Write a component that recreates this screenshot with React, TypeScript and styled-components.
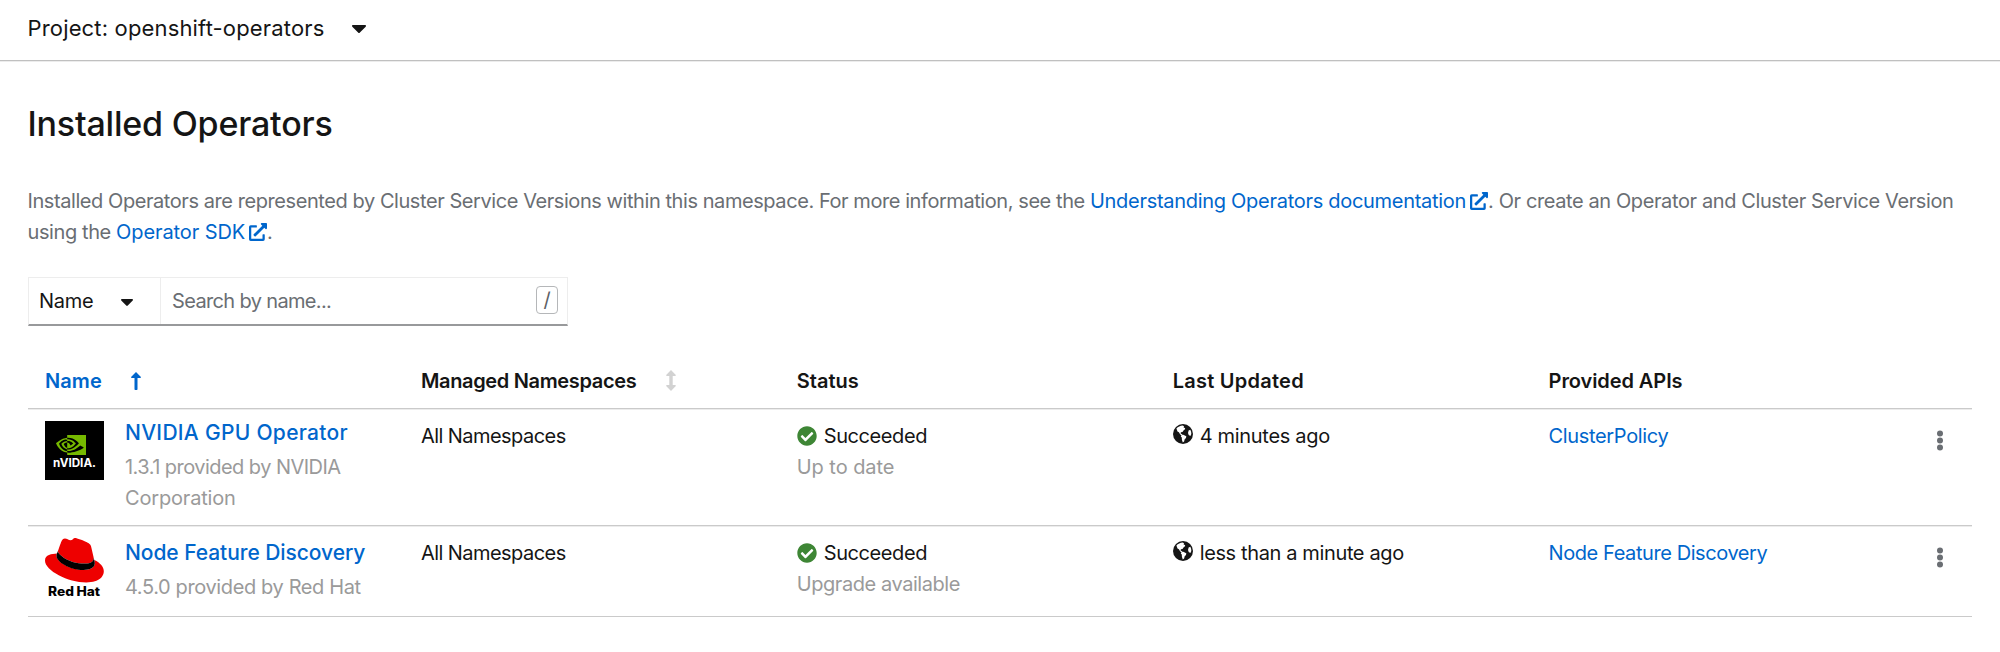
import React from 'react';
import styled, { createGlobalStyle } from 'styled-components';
import { FaCheckCircle, FaExternalLinkAlt } from 'react-icons/fa';
import { SiNvidia } from 'react-icons/si';

const colors = {
  text: '#151515',
  muted: '#6a6e73',
  faint: '#9a9a9a',
  link: '#0066cc',
  line: '#cacaca',
  lineSoft: '#ececec',
  success: '#3e8635',
};

const GlobalStyle = createGlobalStyle`
  * { box-sizing: border-box; }
  body {
    margin: 0;
    background: #fff;
    color: ${colors.text};
    font-family: Inter, "Liberation Sans", sans-serif;
    font-size: 20px;
    line-height: 31px;
  }
  a { color: ${colors.link}; text-decoration: none; }
`;

const Txt = styled.span<{ $ls?: number }>`
  letter-spacing: ${(p) => p.$ls ?? 0}px;
  white-space: nowrap;
`;

const ProjectBar = styled.header`
  display: flex;
  align-items: center;
  gap: 27px;
  height: 61px;
  padding: 0 28px 4px 27.5px;
  border-bottom: 1px solid #c0c0c0;
  box-shadow: 0 1px 0 ${colors.lineSoft};
  font-size: 22px;
`;

const Page = styled.main`
  padding: 41px 28px 0;
`;

const Title = styled.h1`
  margin: 0 0 40px -0.5px;
  font-size: 34px;
  font-weight: 500;
  line-height: 44px;
  letter-spacing: -0.2px;
`;

const Intro = styled.p`
  margin: 0 0 29px -0.5px;
  color: ${colors.muted};
  white-space: nowrap;
`;

const ExternalIcon = styled(FaExternalLinkAlt)`
  width: 18px;
  height: 18px;
  margin-left: 4px;
  vertical-align: -2px;
`;

const FilterBar = styled.div`
  display: flex;
  width: 540px;
  height: 49px;
  border: 1px solid #ededed;
  border-bottom: 2px solid #98999b;
`;

const FilterSelect = styled.button`
  display: flex;
  align-items: center;
  justify-content: space-between;
  width: 132px;
  padding: 0 27px 0 10px;
  border: 0;
  border-right: 1px solid #ededed;
  background: #fff;
  color: ${colors.text};
  font: inherit;
`;

const SearchField = styled.div`
  display: flex;
  flex: 1;
  align-items: center;
  justify-content: space-between;
  padding: 0 9px 0 11px;
  color: ${colors.muted};
`;

const KeyHint = styled.kbd`
  display: flex;
  align-items: center;
  justify-content: center;
  width: 22px;
  height: 28px;
  margin-bottom: 2px;
  border: 1px solid #b5b7b9;
  border-radius: 4px;
  color: #5d6166;
  font: 20px Inter, sans-serif;
`;

const Table = styled.section`
  margin-top: 23px;
`;

const Row = styled.div<{ $height: number }>`
  display: grid;
  grid-template-columns: repeat(5, 375.9px) 1fr;
  height: ${(p) => p.$height}px;
  padding-left: 17px;
  border-bottom: 1px solid ${colors.line};
  box-shadow: 0 1px 0 ${colors.lineSoft};
`;

const HeadRow = styled(Row)`
  align-items: center;
  padding-top: 5px;
  font-weight: 600;
`;

const HeadCell = styled.div<{ $active?: boolean; $gap?: number }>`
  display: flex;
  align-items: center;
  gap: ${(p) => p.$gap ?? 0}px;
  color: ${(p) => (p.$active ? colors.link : colors.text)};

  svg {
    margin-bottom: 1px;
  }
`;

const Cell = styled.div`
  padding-top: 12px;
`;

const NameCell = styled.div`
  display: flex;
  gap: 21px;
  padding-top: 12px;
`;

const NameBlock = styled.div<{ $offset: number }>`
  margin-top: ${(p) => p.$offset}px;
`;

const OperatorLink = styled.a`
  display: block;
  margin-bottom: 4px;
  font-size: 21px;
  font-weight: 500;
`;

const Sub = styled.div`
  color: ${colors.faint};
`;

const IconLine = styled.div<{ $gap: number }>`
  display: flex;
  align-items: center;
  gap: ${(p) => p.$gap}px;
`;

const SuccessIcon = styled(FaCheckCircle)`
  width: 20px;
  height: 20px;
  margin-bottom: 1px;
  color: ${colors.success};
`;

const GlobeSvg = styled.svg`
  margin-bottom: 6px;
`;

const ActionCell = styled.div`
  display: flex;
  padding: 21px 0 0 13px;
`;

const NvidiaTile = styled.div`
  display: flex;
  flex: none;
  flex-direction: column;
  width: 59px;
  height: 59px;
  padding: 9px 0 0 7px;
  background: #000;
  color: #76b900;
`;

const NvidiaEye = styled(SiNvidia)`
  width: 30px;
  height: 30px;
  margin-left: 4px;
`;

const Wordmark = styled.svg`
  margin-top: -7px;
  overflow: visible;
`;

const RedHatSvg = styled.svg`
  flex: none;
  overflow: visible;
`;

const CaretSvg = styled.svg`
  position: relative;
  top: 1.5px;
`;

const Caret = ({ width }: { width: number }) => (
  <CaretSvg width={width} height={width * 0.58} viewBox="0 0 14 8" fill={colors.text}>
    <path d="M1 0h12c.9 0 1.3 1 .7 1.6L7.9 7.5a1.2 1.2 0 0 1-1.8 0L.3 1.6C-.3 1 .1 0 1 0z" />
  </CaretSvg>
);

const SortUp = () => (
  <svg width="10" height="18" viewBox="0 0 10 18" fill={colors.link}>
    <path d="M5 0l4.700 4.700c.5.5.2 1.300-.5 1.300H6.500v11.200c0 .4-.3.7-.7.7H4.200a.7.7 0 0 1-.7-.7V6H.8C.1 6-.2 5.200.3 4.700z" />
  </svg>
);

const SortBoth = () => (
  <svg width="10" height="21" viewBox="0 0 10 21" fill="#d2d2d2">
    <path d="M5 0l4.600 4.700c.5.5.2 1.300-.5 1.300H6.700v9h2.400c.7 0 1 .8.5 1.300L5 21 .4 16.300C-.1 15.800.2 15 .9 15h2.400V6H.9C.2 6-.1 5.200.4 4.700z" />
  </svg>
);

const Globe = () => (
  <GlobeSvg width="20" height="20" viewBox="0 0 20 20">
    <circle cx="10" cy="10" r="10" fill={colors.text} />
    <path
      fill="#fff"
      d="M3.400 4.600C5 2.700 7.200 1.700 9.800 1.500l1.200.8-.4 1.300 1.300.3.300 1.200-1.700 1.300-1 1.500-1.600.4-.3 1.300 1.900.8-.3 1.200-2-1.200-1.300-2.100-1.400-.9z"
    />
    <path fill="#fff" d="M8.300 11.300l2-.5 3 1.500-.3 1.700-1.300 1.300-.6 2.100-1.300 1-.9-2.600-.1-2.200-1-1.100z" />
    <path fill="#fff" d="M15.600 6.400l1.700-.6c.8 1.300 1.100 2.700 1 4.200l-.9 1.900-1.700-1-.7-1.800z" />
  </GlobeSvg>
);

const Kebab = () => (
  <svg width="6" height="22" viewBox="0 0 6 22" fill="#6a6e73">
    <circle cx="3" cy="3.500" r="3" />
    <circle cx="3" cy="10.500" r="3" />
    <circle cx="3" cy="17.500" r="3" />
  </svg>
);

const NvidiaLogo = () => (
  <NvidiaTile>
    <NvidiaEye />
    <Wordmark width="46" height="20" viewBox="0 0 46 20">
      <text x="1" y="13.500" fill="#fff" fontFamily="Inter, sans-serif" fontSize="11.500" fontWeight="700" textLength="43" lengthAdjust="spacingAndGlyphs">
        nVIDIA.
      </text>
    </Wordmark>
  </NvidiaTile>
);

const RedHatLogo = () => (
  <RedHatSvg width="59" height="59" viewBox="0 0 59 59">
    <g transform="translate(0 -7.200) scale(2.450)">
      <path
        fill="#e00"
        d="M16.009 13.386c1.577 0 3.860-.326 3.860-2.202a1.765 1.765 0 0 0-.04-.431l-.94-4.080c-.216-.898-.406-1.305-1.982-2.093-1.223-.625-3.888-1.658-4.676-1.658-.733 0-.947.946-1.822.946-.842 0-1.467-.706-2.255-.706-.757 0-1.250.515-1.630 1.576 0 0-1.060 2.990-1.197 3.424a.81.81 0 0 0-.028.245c0 1.162 4.577 4.974 10.710 4.974m4.101-1.435c.218 1.032.218 1.140.218 1.277 0 1.765-1.984 2.745-4.593 2.745-5.895.004-11.060-3.451-11.060-5.734a2.326 2.326 0 0 1 .190-.925C2.746 9.415 0 9.794 0 12.217c0 3.969 9.405 8.861 16.851 8.861 5.710 0 7.149-2.582 7.149-4.620 0-1.605-1.387-3.425-3.887-4.512"
      />
      <path
        fill="#000"
        d="M20.110 11.950c.218 1.030.218 1.140.218 1.277 0 1.765-1.984 2.745-4.593 2.745-5.895 0-11.060-3.450-11.060-5.734 0-.320.065-.630.190-.925l.46-1.140a.82.82 0 0 0-.03.25c0 1.160 4.577 4.970 10.710 4.970 1.577 0 3.860-.326 3.860-2.200a1.770 1.770 0 0 0-.04-.43z"
      />
    </g>
    <text x="3" y="57.500" fill="#000" fontFamily="Inter, sans-serif" fontSize="12.500" fontWeight="800" wordSpacing="-0.500" textLength="52" lengthAdjust="spacingAndGlyphs">
      Red Hat
    </text>
  </RedHatSvg>
);

interface Label {
  text: string;
  ls: number;
}

interface Operator {
  logo: React.ReactNode;
  name: Label;
  provider: Label[];
  update: Label;
  updated: Label;
  api: Label;
  height: number;
  nameOffset: number;
}

const operators: Operator[] = [
  {
    logo: <NvidiaLogo />,
    name: { text: 'NVIDIA GPU Operator', ls: 0.3 },
    provider: [
      { text: '1.3.1 provided by NVIDIA', ls: -0.54 },
      { text: 'Corporation', ls: -0.18 },
    ],
    update: { text: 'Up to date', ls: -0.06 },
    updated: { text: '4 minutes ago', ls: -0.31 },
    api: { text: 'ClusterPolicy', ls: -0.34 },
    height: 117,
    nameOffset: -4,
  },
  {
    logo: <RedHatLogo />,
    name: { text: 'Node Feature Discovery', ls: -0.06 },
    provider: [{ text: '4.5.0 provided by Red Hat', ls: -0.38 }],
    update: { text: 'Upgrade available', ls: -0.44 },
    updated: { text: 'less than a minute ago', ls: -0.37 },
    api: { text: 'Node Feature Discovery', ls: -0.42 },
    height: 91,
    nameOffset: -1,
  },
];

const OperatorRow = ({ op }: { op: Operator }) => (
  <Row $height={op.height}>
    <NameCell>
      {op.logo}
      <NameBlock $offset={op.nameOffset}>
        <OperatorLink href="#">
          <Txt $ls={op.name.ls}>{op.name.text}</Txt>
        </OperatorLink>
        {op.provider.map((line) => (
          <Sub key={line.text}>
            <Txt $ls={line.ls}>{line.text}</Txt>
          </Sub>
        ))}
      </NameBlock>
    </NameCell>
    <Cell>
      <Txt $ls={-0.55}>All Namespaces</Txt>
    </Cell>
    <Cell>
      <IconLine $gap={7}>
        <SuccessIcon />
        <Txt $ls={-0.42}>Succeeded</Txt>
      </IconLine>
      <Sub>
        <Txt $ls={op.update.ls}>{op.update.text}</Txt>
      </Sub>
    </Cell>
    <Cell>
      <IconLine $gap={7}>
        <Globe />
        <Txt $ls={op.updated.ls}>{op.updated.text}</Txt>
      </IconLine>
    </Cell>
    <Cell>
      <a href="#">
        <Txt $ls={op.api.ls}>{op.api.text}</Txt>
      </a>
    </Cell>
    <ActionCell>
      <Kebab />
    </ActionCell>
  </Row>
);

export default function App() {
  return (
    <>
      <GlobalStyle />
      <ProjectBar>
        <Txt $ls={0.16}>Project: openshift-operators</Txt>
        <Caret width={14} />
      </ProjectBar>
      <Page>
        <Title>Installed Operators</Title>
        <Intro>
          <Txt $ls={-0.43}>
            Installed Operators are represented by Cluster Service Versions within this namespace. For more information, see the{' '}
          </Txt>
          <a href="#">
            <Txt $ls={-0.289}>Understanding Operators documentation</Txt>
            <ExternalIcon />
          </a>
          <Txt $ls={-0.394}>. Or create an Operator and Cluster Service Version</Txt>
          <br />
          <Txt $ls={-0.4}>using the </Txt>
          <a href="#">
            <Txt $ls={-0.1}>Operator SDK</Txt>
            <ExternalIcon />
          </a>
          .
        </Intro>
        <FilterBar>
          <FilterSelect>
            <Txt $ls={-0.27}>Name</Txt>
            <Caret width={12} />
          </FilterSelect>
          <SearchField>
            <Txt $ls={-0.65}>Search by name...</Txt>
            <KeyHint>/</KeyHint>
          </SearchField>
        </FilterBar>
        <Table>
          <HeadRow $height={60}>
            <HeadCell $active $gap={29}>
              <Txt $ls={0.1}>Name</Txt>
              <SortUp />
            </HeadCell>
            <HeadCell $gap={30}>
              <Txt $ls={-0.34}>Managed Namespaces</Txt>
              <SortBoth />
            </HeadCell>
            <HeadCell>
              <Txt>Status</Txt>
            </HeadCell>
            <HeadCell>
              <Txt $ls={0.25}>Last Updated</Txt>
            </HeadCell>
            <HeadCell>
              <Txt $ls={-0.08}>Provided APIs</Txt>
            </HeadCell>
          </HeadRow>
          {operators.map((op) => (
            <OperatorRow key={op.name.text} op={op} />
          ))}
        </Table>
      </Page>
    </>
  );
}
